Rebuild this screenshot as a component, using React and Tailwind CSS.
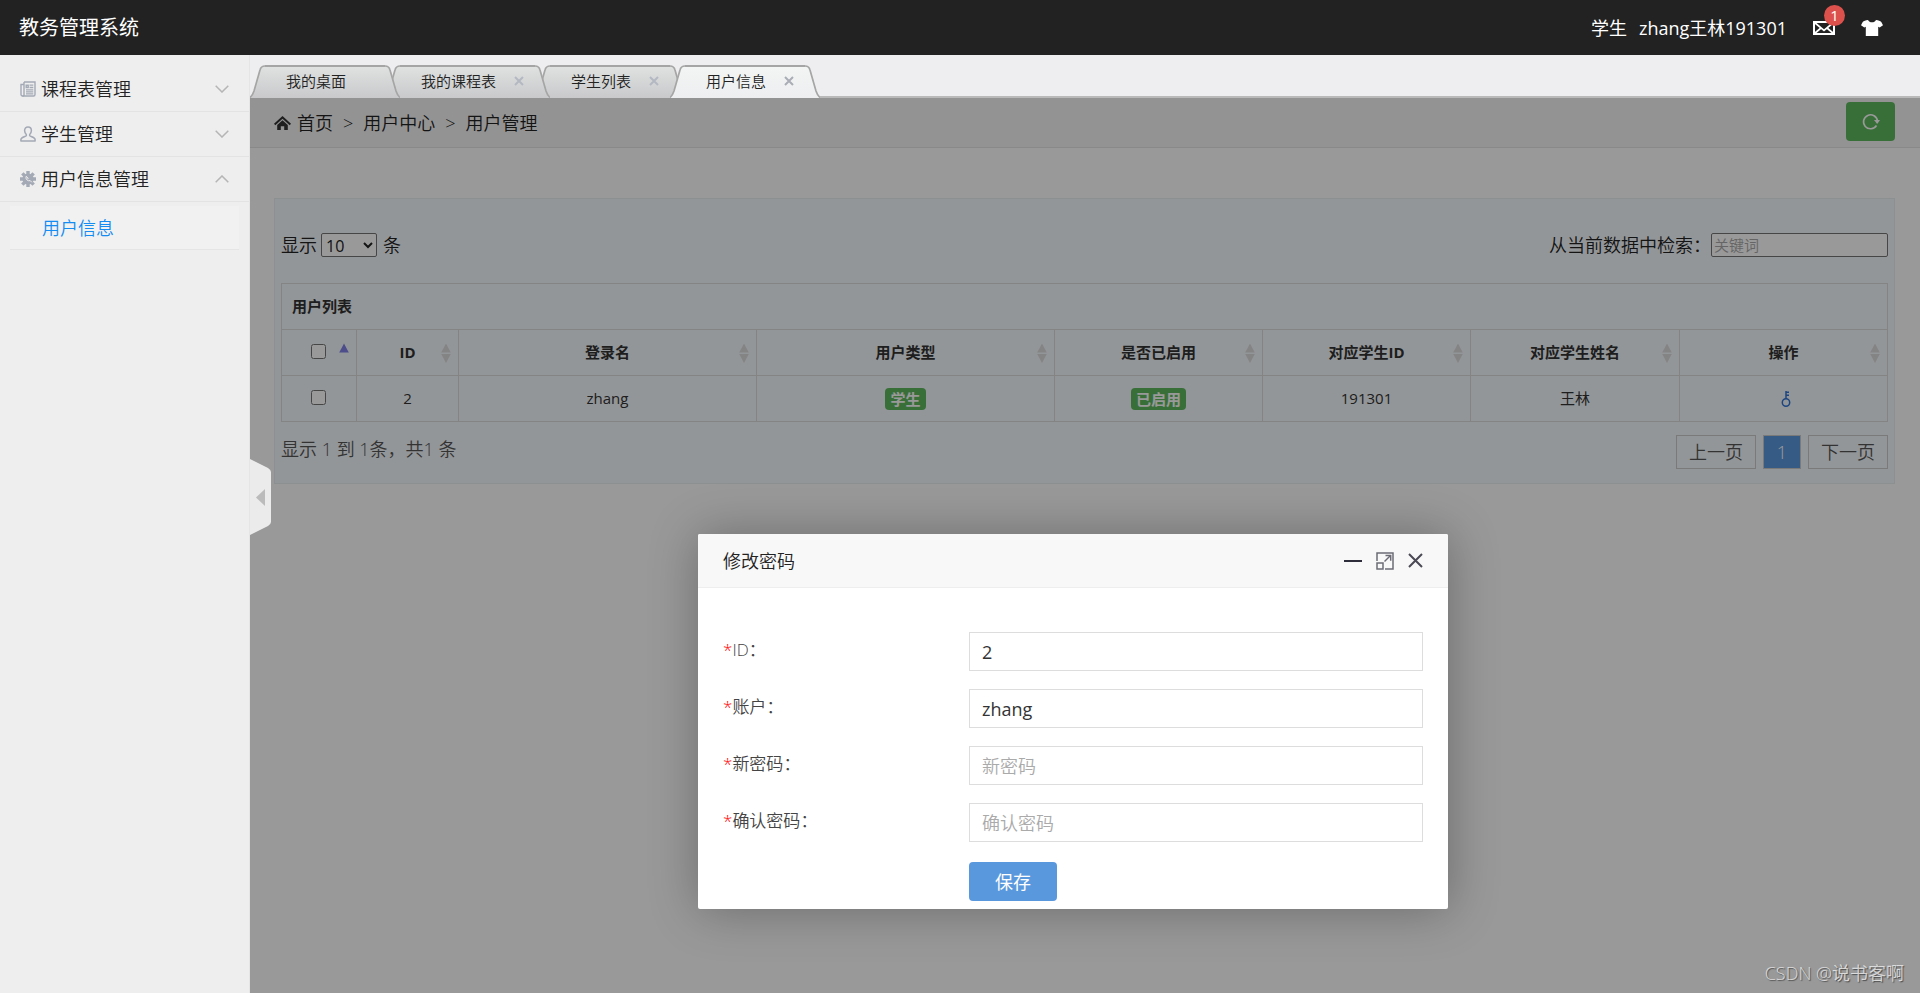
import { useState } from 'react';

const menus = [
  { title: '课程表管理', icon: NewsIcon, open: false },
  { title: '学生管理', icon: UserIcon, open: false },
  { title: '用户信息管理', icon: GearIcon, open: true, children: ['用户信息'] },
];

const tabs = [
  { title: '我的桌面', closable: false, layer: 'z-[3]' },
  { title: '我的课程表', closable: true, layer: 'z-[2]' },
  { title: '学生列表', closable: true, layer: 'z-[1]' },
  { title: '用户信息', closable: true, active: true, layer: 'z-[4]' },
];

const columns = ['ID', '登录名', '用户类型', '是否已启用', '对应学生ID', '对应学生姓名', '操作'];

const fields = [
  { id: 'uid', label: 'ID', type: 'text', value: '2' },
  { id: 'account', label: '账户', type: 'text', value: 'zhang' },
  { id: 'password', label: '新密码', type: 'password', value: '' },
  { id: 'password2', label: '确认密码', type: 'password', value: '' },
];

function NewsIcon() {
  return (
    <svg className="size-4" viewBox="0 0 16 16" fill="none" stroke="#a3a9b5" strokeWidth="1.400">
      <path d="M4 1h11v12.500a1.500 1.500 0 0 1-1.500 1.500H2.500A1.500 1.500 0 0 1 1 13.500V3.500h3" />
      <path d="M4 1v12.500a1.200 1.200 0 0 1-1.500 1.500" />
      <path d="M9.500 4.200h3.800M9.500 6.500h3.800M6 8.800h7.300M6 10.800h7.300M6 12.800h7.300" strokeWidth="1.300" />
      <path d="M6.200 4.200h2v2.300h-2z" />
    </svg>
  );
}

function UserIcon() {
  return (
    <svg className="size-4" viewBox="0 0 16 16" fill="none" stroke="#a3a9b5" strokeWidth="1.500" strokeLinejoin="round">
      <path d="M8 .9c-2.200 0-3.400 1.500-3.400 3.700 0 1.700.7 3 1.700 3.900v1.300c-.3.700-5.400 1.300-5.400 3.800v1.500h14.200v-1.500c0-2.500-5.100-3.100-5.400-3.800V8.500c1-.9 1.700-2.200 1.700-3.900C11.400 2.400 10.200.9 8 .9z" />
    </svg>
  );
}

function GearIcon() {
  return (
    <svg className="size-4" viewBox="0 0 16 16">
      <g fill="#a3a9b5">
        <circle cx="8" cy="8" r="5.600" />
        <path d="M6.300 0h3.400v16H6.300zM0 6.300h16v3.400H0z" />
        <path d="M6.300 0h3.400v16H6.300zM0 6.300h16v3.400H0z" transform="rotate(45 8 8)" />
      </g>
      <path d="M6.200 5.300a3.200 3.200 0 0 0 4 4.300l1.600 1.700M6.200 5.300l1.700 1.500.2 1.300" fill="none" stroke="#eee" strokeWidth="1" />
    </svg>
  );
}

function Chevron({ up }) {
  return (
    <svg className="w-3.5 h-2" viewBox="0 0 14 8" fill="none" stroke="#b5b5b5" strokeWidth="1.500">
      <path d={up ? 'M.7 7.300 7 1l6.300 6.300' : 'M.7.7 7 7 13.300.7'} />
    </svg>
  );
}

function SortIcon({ asc }) {
  return (
    <svg className="absolute right-[7px] top-1/2 -translate-y-1/2 w-2.5 h-5" viewBox="0 0 10 20">
      <path d="M5 .5 9.800 9.500H.2z" fill={asc ? '#8080e8' : '#dcdcdc'} />
      {!asc && <path d="M.2 11h9.600L5 20z" fill="#dcdcdc" />}
    </svg>
  );
}

function Header() {
  return (
    <header className="h-[55px] shrink-0 bg-[#222] text-white flex items-center justify-between pl-[19px] pr-[37px]">
      <h1 className="text-xl leading-6 font-normal">教务管理系统</h1>
      <div className="flex items-center text-lg leading-6 font-normal">
        <span>学生</span>
        <a href="#" className="ml-3">zhang王林191301</a>
        <a href="#" className="relative ml-[26px]" aria-label="消息">
          <svg className="w-[22px] h-3.5" viewBox="0 0 22 14" fill="none" stroke="#fff" strokeWidth="2">
            <path d="M1 1h20v12H1z" />
            <path d="m1.500 1.500 9.500 8 9.500-8M1.500 12.500 8 7M20.500 12.500 14 7" strokeWidth="1.700" />
          </svg>
          <span className="absolute -top-4 left-[11px] size-[21px] rounded-full bg-[#dd514c] text-[15px] leading-5 text-center">1</span>
        </a>
        <a href="#" className="ml-[26px]" aria-label="换肤">
          <svg className="w-[22px] h-4" viewBox="0 0 22 16" fill="#fff">
            <path d="M7 0c.8 1.500 2.200 2.300 4 2.300S14.200 1.500 15 0c2.400.2 4.300.9 5.300 2L22 5.300l-3.300 2.200-1.500-.8V16H4.800V6.700l-1.500.8L0 5.300 1.700 2C2.700.9 4.600.2 7 0z" />
          </svg>
        </a>
      </div>
    </header>
  );
}

function Sidebar() {
  return (
    <aside className="w-[250px] shrink-0 bg-[#eee] border-r border-[#e5e5e5] pt-3">
      {menus.map(({ title, icon: Icon, open, children }) => (
        <div key={title}>
          <button type="button" className="w-full h-[45px] pl-5 pr-5 flex items-center border-b border-[#e3e3e3] text-lg leading-6 text-[#222]">
            <Icon />
            <span className="ml-[5px]">{title}</span>
            <span className="ml-auto"><Chevron up={open} /></span>
          </button>
          {open && (
            <ul className="px-2.5 pt-1">
              {children.map((c) => (
                <li key={c} className="h-[44px] pl-8 flex items-center bg-[#f1f1f1] border-b border-[#e5e5e5]">
                  <a href="#" className="text-lg leading-6 text-[#148cf1]">{c}</a>
                </li>
              ))}
            </ul>
          )}
        </div>
      ))}
    </aside>
  );
}

function TabCap({ active, right }) {
  const id = `cap-${active ? 'on' : 'off'}-${right ? 'r' : 'l'}`;
  return (
    <svg className={`w-[15px] h-[33px] shrink-0 ${right ? '-scale-x-100' : ''}`} viewBox="0 0 15 33">
      <defs>
        <linearGradient id={id} x1="0" y1="0" x2="0" y2="1">
          <stop offset="0" stopColor={active ? '#f2f5f4' : '#dfe2e1'} />
          <stop offset="1" stopColor={active ? '#eeeef0' : '#c9c9cb'} />
        </linearGradient>
      </defs>
      <path d="M0 33C2 31 3 29 4 26L10 5Q11 1 15 1V33z" fill={`url(#${id})`} />
      <path d="M0 32.500C2 31 3 29 4 26L10 5Q11 1 15 1" fill="none" stroke="#a5a5a5" strokeWidth="1.700" />
    </svg>
  );
}

function TabBar() {
  return (
    <nav className="h-[43px] shrink-0 bg-[#eeeef0] border-b-2 border-[#b9b9ba] flex items-end">
      {tabs.map((t) => (
        <div key={t.title} className={`relative flex -mr-[15px] -mb-0.5 ${t.layer}`}>
          <TabCap active={t.active} />
          <div
            className={`h-[33px] border-t-2 border-[#a5a5a5] bg-linear-to-b flex items-center pl-[21px] pb-1 ${
              t.active ? 'from-[#f2f5f4] to-[#eeeef0]' : 'from-[#dfe2e1] to-[#c9c9cb]'
            }`}
          >
            <a href="#" className="text-[15px] leading-5 text-[#222]">{t.title}</a>
            <span className="w-[39px] flex justify-center pl-[7px]">
              {t.closable && (
                <button type="button" aria-label="关闭">
                  <svg className="size-2.5" viewBox="0 0 10 10" stroke={t.active ? '#a9adb5' : '#b4b8c2'} strokeWidth="2">
                    <path d="m1 1 8 8M9 1 1 9" />
                  </svg>
                </button>
              )}
            </span>
          </div>
          <TabCap active={t.active} right />
        </div>
      ))}
    </nav>
  );
}

function Breadcrumb() {
  return (
    <nav className="h-[50px] border-b border-[#e5e5e5] bg-[#f5f5f5] pl-6 pr-[25px] flex items-center text-lg leading-6 text-[#222]">
      <svg className="w-[17px] h-3.5 mr-1.5" viewBox="0 0 17 14" fill="#333">
        <path d="M8.500 0 17 7.800l-1.300 1.500L8.500 2.700 1.300 9.300 0 7.800z" />
        <path d="m8.500 4.200 5.300 4.900V14h-3.600v-3.800H6.800V14H3.200V9.100z" />
      </svg>
      <a href="#">首页</a>
      <span className="mx-2.5">&gt;</span>
      <span>用户中心</span>
      <span className="mx-2.5">&gt;</span>
      <span>用户管理</span>
      <button type="button" aria-label="刷新" className="ml-auto w-[49px] h-[39px] mb-0.5 rounded bg-[#5eb95e] flex items-center justify-center">
        <svg className="size-[18px]" viewBox="0 0 18 18" fill="none" stroke="#fff" strokeWidth="1.600">
          <path d="M14.500 12.500A7 7 0 1 1 15.500 8" />
          <path d="M12 7h6l-2.800 4z" fill="#fff" stroke="none" />
        </svg>
      </button>
    </nav>
  );
}

function UserTable() {
  const cell = 'h-[46px] border border-[#ddd] text-center';
  return (
    <table className="w-full table-fixed border-collapse text-[15px] leading-5 font-normal text-[#333]">
      <colgroup>
        <col className="w-[75px]" />
        <col className="w-[102px]" />
        <col className="w-[298px]" />
        <col className="w-[298px]" />
        <col className="w-[208px]" />
        <col className="w-[208px]" />
        <col className="w-[209px]" />
        <col className="w-[208px]" />
      </colgroup>
      <thead>
        <tr>
          <th colSpan="8" className="h-[46px] border border-[#ddd] px-2.5 pb-0.5 text-left font-bold">用户列表</th>
        </tr>
        <tr>
          <th className={`${cell} relative pb-1.5 pr-0.5`}>
            <input type="checkbox" aria-label="全选" className="size-[15px] align-middle" />
            <SortIcon asc />
          </th>
          {columns.map((c) => (
            <th key={c} className={`${cell} relative pb-0.5 font-bold`}>
              {c}
              <SortIcon />
            </th>
          ))}
        </tr>
      </thead>
      <tbody>
        <tr>
          <td className={`${cell} pb-1.5 pr-0.5`}>
            <input type="checkbox" aria-label="选择" className="size-[15px] align-middle" />
          </td>
          <td className={`${cell} pb-0.5`}>2</td>
          <td className={`${cell} pb-0.5`}>zhang</td>
          <td className={cell}><span className="inline-block rounded bg-[#5eb95e] px-[5px] leading-[22px] font-bold text-white">学生</span></td>
          <td className={cell}><span className="inline-block rounded bg-[#5eb95e] px-[5px] leading-[22px] font-bold text-white">已启用</span></td>
          <td className={`${cell} pb-0.5`}>191301</td>
          <td className={`${cell} pb-0.5`}>王林</td>
          <td className={`${cell} pb-0.5 pl-1`}>
            <a href="#" aria-label="修改密码" className="inline-block align-middle">
              <svg className="w-2.5 h-4" viewBox="0 0 10 16" fill="none" stroke="#2f74d8" strokeWidth="1.500">
                <circle cx="5" cy="11.500" r="3.700" />
                <path d="M5 8V0M5 1.200h3M5 4.200h3" />
              </svg>
            </a>
          </td>
        </tr>
      </tbody>
    </table>
  );
}

function UserPanel() {
  return (
    <section className="ml-6 mr-[25px] mt-[50px] border border-[#ecf0f2] bg-[#f5fafe] px-1.5 pt-[30px] pb-3.5">
      <div className="flex items-center justify-between text-lg leading-8 text-[#222]">
        <label className="flex items-center">
          显示
          <select className="ml-1 mr-1.5 w-14 h-6 rounded-xs border border-[#767676] bg-white text-base leading-5 font-normal" defaultValue="10">
            <option>10</option>
            <option>25</option>
            <option>50</option>
          </select>
          条
        </label>
        <label className="flex items-center">
          从当前数据中检索：
          <input type="text" placeholder="关键词" className="w-[177px] h-6 rounded-xs border border-[#767676] bg-white px-0.5 text-[15px] placeholder:text-[#a9a9a9]" />
        </label>
      </div>
      <div className="mt-[22px]">
        <UserTable />
      </div>
      <div className="flex justify-between pt-[13px] text-lg text-[#555]">
        <p className="leading-7">显示 1 到 1条，共1 条</p>
        <div className="flex gap-[7px] leading-8">
          <button type="button" className="h-[34px] w-20 border border-[#ccc]">上一页</button>
          <button type="button" className="h-[34px] w-[38px] border border-[#ccc] bg-[#5a98de] text-white">1</button>
          <button type="button" className="h-[34px] w-20 border border-[#ccc]">下一页</button>
        </div>
      </div>
    </section>
  );
}

function PasswordDialog() {
  const [values, setValues] = useState(Object.fromEntries(fields.map((f) => [f.id, f.value])));

  return (
    <div role="dialog" aria-label="修改密码" className="absolute left-[448px] top-[436px] w-[750px] rounded-xs bg-white shadow-[1px_1px_50px_rgba(0,0,0,0.3)]">
      <div className="h-[54px] px-[25px] flex items-center justify-between rounded-t-xs border-b border-[#eee] bg-[#f8f8f8]">
        <h2 className="text-lg leading-6 text-[#222]">修改密码</h2>
        <div className="flex items-center gap-3.5">
          <button type="button" aria-label="最小化" className="w-[18px] h-0.5 bg-[#2e2d3c]" />
          <button type="button" aria-label="最大化">
            <svg className="size-[18px]" viewBox="0 0 18 18" fill="none" stroke="#6b6b76" strokeWidth="1.500">
              <path d="M1 9V1h16v16H9" />
              <path d="M1 11h6v6H1z" />
              <path d="M8.500 9.500 14 4" />
              <path d="M9.500 3.500h5.200v5.200" />
            </svg>
          </button>
          <button type="button" aria-label="关闭">
            <svg className="size-[15px]" viewBox="0 0 15 15" stroke="#4a4955" strokeWidth="2">
              <path d="m1 1 13 13M14 1 1 14" />
            </svg>
          </button>
        </div>
      </div>
      <form className="px-[25px] pt-11 pb-2 flex flex-col gap-[18px] text-lg" onSubmit={(e) => e.preventDefault()}>
        {fields.map((f) => (
          <div key={f.id} className="flex">
            <label htmlFor={f.id} className="w-[246px] text-[17px] leading-9 text-[#444]">
              <span className="text-[#f00]">*</span>{f.label}：
            </label>
            <input
              id={f.id}
              type={f.type}
              value={values[f.id]}
              placeholder={f.type === 'password' ? f.label : undefined}
              onChange={(e) => setValues({ ...values, [f.id]: e.target.value })}
              className="flex-1 h-[39px] border border-[#ddd] px-3 font-normal text-[#333] placeholder:font-[350] placeholder:text-[#aaa]"
            />
          </div>
        ))}
        <div className="pl-[246px] pt-0.5">
          <button type="submit" className="block w-[88px] h-[39px] rounded bg-[#5a98de] font-normal text-white">保存</button>
        </div>
      </form>
    </div>
  );
}

function App() {
  return (
    <div className="h-screen flex flex-col overflow-hidden font-[350] font-['Open_Sans','Noto_Sans_CJK_SC',sans-serif]">
      <Header />
      <div className="flex-1 flex min-h-0">
        <Sidebar />
        <div className="relative flex-1 min-w-0 flex flex-col">
          <TabBar />
          <main className="relative flex-1 overflow-hidden bg-white">
            <Breadcrumb />
            <UserPanel />
            <div className="absolute inset-0 bg-black/40" />
            <PasswordDialog />
            <p className="absolute right-4 bottom-1.5 text-lg leading-7 text-white/70 [text-shadow:1px_1px_1px_rgba(0,0,0,0.5)]">CSDN @说书客啊</p>
          </main>
          <button type="button" aria-label="收起菜单" className="absolute left-0 top-[404px]">
            <svg className="w-[21px] h-[76px]" viewBox="0 0 21 76">
              <path d="M0 0 18 9q3 2 3 4v50q0 2-3 4L0 76z" fill="#ebebeb" />
              <path d="M15 30v17l-9-8.500z" fill="#bbb" />
            </svg>
          </button>
        </div>
      </div>
    </div>
  );
}

export default App;
